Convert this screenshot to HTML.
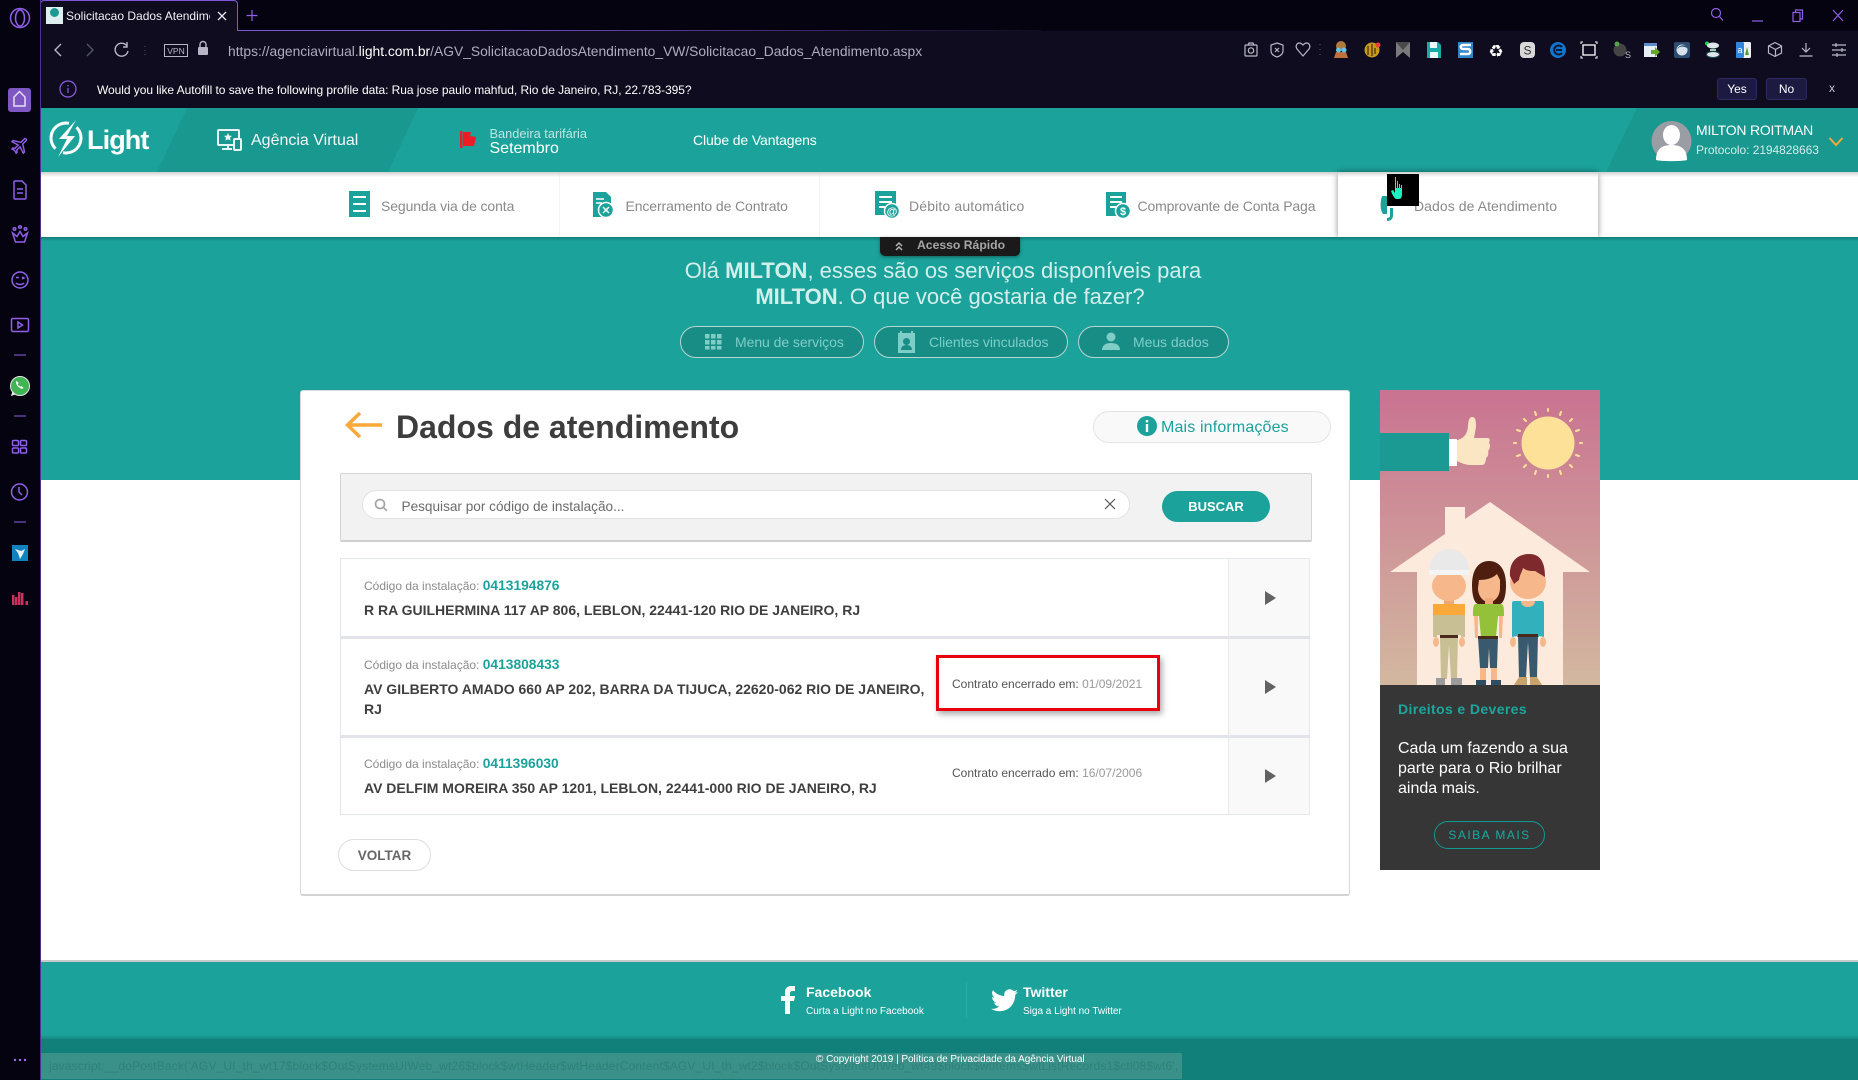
<!DOCTYPE html>
<html lang="pt-BR"><head><meta charset="utf-8"><title>Solicitacao Dados Atendimento</title>
<style>
*{box-sizing:border-box}
html,body{margin:0;padding:0;width:1858px;height:1080px;overflow:hidden;background:#fff;font-family:"Liberation Sans",sans-serif}
.a{position:absolute}
.t{position:absolute;white-space:nowrap}
.pill{position:absolute;height:32px;border-radius:16px;background:#178d86;border:1px solid #b9d4d1}
.cell{position:absolute;top:172px;height:65px;width:260px;border-right:1px solid #f4f4f4;background:#fff}
.sn{position:absolute;top:196.500px;line-height:18px;font-size:14px;letter-spacing:-.11px;color:#8a8a8a;white-space:nowrap}
.code{position:absolute;left:364px;font-size:12px;line-height:16px;color:#8b8b8b;white-space:nowrap}
.code b{color:#1ba29b;font-size:13.800px}
.addr{position:absolute;left:364px;font-size:14px;line-height:20px;font-weight:700;color:#3f3f3f;white-space:nowrap}
.enc{position:absolute;left:952px;font-size:12px;line-height:16px;color:#555;white-space:nowrap}
.enc span{color:#999}
</style></head>
<body>
<!-- browser chrome -->
<div class="a" style="left:0;top:0;width:1858px;height:31px;background:#05030f"></div>
<div class="a" style="left:41px;top:31px;width:1817px;height:77px;background:#0e0c1e"></div>
<div class="a" style="left:41px;top:30px;width:1000px;height:1px;background:linear-gradient(90deg,#7d55d8 0,#7d55d8 40%,#0e0c1e 100%)"></div>
<div class="a" style="left:40px;top:0;width:198px;height:31px;background:#0e0c1e;border:1px solid #7d55d8;border-bottom:0;border-radius:4px 4px 0 0"></div>
<div class="a" style="left:46px;top:7px;width:17px;height:17px;background:#dfeeee"></div>
<div class="a" style="left:50px;top:8px;width:9px;height:9px;border-radius:50%;background:#1a9a93"></div>
<div class="t" style="left:66px;top:8px;width:144px;overflow:hidden;font-size:12px;line-height:16px;color:#f0eff5">Solicitacao Dados Atendimento</div>
<div class="t" style="left:228px;top:41px;font-size:13.840px;line-height:20px;color:#aeacbd">https://agenciavirtual.<span style="color:#fff">light.com.br</span>/AGV_SolicitacaoDadosAtendimento_VW/Solicitacao_Dados_Atendimento.aspx</div>
<div class="t" style="left:97px;top:81px;font-size:12px;line-height:18px;color:#fff;letter-spacing:-.055px">Would you like Autofill to save the following profile data: Rua jose paulo mahfud, Rio de Janeiro, RJ, 22.783-395?</div>
<div class="t" style="left:1717px;top:78px;width:40px;height:22px;background:#1c1a40;border:1px solid #2e2a5f;border-radius:3px;color:#fff;font-size:12px;line-height:20px;text-align:center">Yes</div>
<div class="t" style="left:1766px;top:78px;width:41px;height:22px;background:#1c1a40;border:1px solid #2e2a5f;border-radius:3px;color:#fff;font-size:12px;line-height:20px;text-align:center">No</div>
<div class="t" style="left:1829px;top:80px;font-size:12px;line-height:16px;color:#c5c4d0">x</div>

<!-- sidebar -->
<div class="a" style="left:0;top:0;width:41px;height:1080px;background:#05030f;border-right:1px solid #4d3494;z-index:5"></div>

<!-- header -->
<div class="a" style="left:41px;top:108px;width:1817px;height:64px;background:#1ba29b"></div>
<svg class="a" style="left:41px;top:108px" width="1817" height="64" viewBox="41 108 1817 64">
<polygon points="187,108 418,108 388,172 157,172" fill="#18988f"/>
<polygon points="1637,108 1858,108 1858,172 1606,172" fill="#18988f"/>
<g fill="none" stroke="#fff" stroke-width="3">
<path d="M69 123.300A15 15 0 0 0 55.500 148.700"/>
<path d="M63 152.700A15 15 0 0 0 76.500 127.300"/>
</g>
<polygon points="76,120 59,139 67,139 58,157 75,136 67,136" fill="#fff"/>
<g fill="none" stroke="#e8f5f4" stroke-width="2"><rect x="218" y="130" width="21" height="15" rx="1"/><path d="M228 145v4M222 149h10"/><rect x="234" y="139" width="7" height="11" rx="1" fill="#18968f"/></g>
<path d="M228 133l1.200 2.600 2.800.3-2 1.900.5 2.800-2.500-1.400-2.500 1.400.5-2.800-2-1.900 2.800-.3z" fill="#e8f5f4"/>
<path d="M460 131h2.500v17H460zM463 132h8l-1 4 6 1-2 9h-11z" fill="#ec1b24"/>
<circle cx="1671.500" cy="141" r="20" fill="#9a9da3"/>
<ellipse cx="1671.500" cy="135" rx="8.500" ry="10" fill="#fff"/>
<path d="M1656 160c0-11 6-15 15.500-15s15.500 4 15.500 15c-4 1.500-27 1.500-31 0z" fill="#fff"/>
<path d="M1829.500 138l6.500 7 6.500-7" fill="none" stroke="#f4a83a" stroke-width="2"/>
</svg>
<div class="t" style="left:87px;top:123px;font-size:27px;line-height:34px;font-weight:700;color:#fff;letter-spacing:-.9px">Light</div>
<div class="t" style="left:251px;top:131px;font-size:16px;line-height:20px;color:#f0f9f8">Agência Virtual</div>
<div class="t" style="left:489.500px;top:126px;font-size:12.800px;line-height:16px;color:#bfe5e1">Bandeira tarifária</div>
<div class="t" style="left:489.500px;top:140px;font-size:16px;line-height:18px;color:#fff">Setembro</div>
<div class="t" style="left:693px;top:131px;font-size:14px;line-height:18px;color:#fff;letter-spacing:-.12px">Clube de Vantagens</div>
<div class="t" style="left:1696px;top:121px;font-size:14px;line-height:18px;color:#fff;letter-spacing:-.22px">MILTON ROITMAN</div>
<div class="t" style="left:1696px;top:142px;font-size:12px;line-height:16px;color:#d2ecea;letter-spacing:-.06px">Protocolo: 2194828663</div>

<!-- subnav -->
<div class="a" style="left:41px;top:172px;width:1817px;height:65px;background:#fff"></div>
<div class="cell" style="left:300px"></div><div class="cell" style="left:560px"></div><div class="cell" style="left:820px"></div><div class="cell" style="left:1079px"></div>
<div class="a" style="left:1338px;top:172px;width:260px;height:65px;background:#fff;box-shadow:0 0 6px rgba(0,0,0,.45)"></div>
<div class="a" style="left:41px;top:172px;width:1817px;height:5px;background:linear-gradient(#cfcfcf,rgba(255,255,255,0))"></div>
<div class="sn" style="left:381px">Segunda via de conta</div>
<div class="sn" style="left:625.500px">Encerramento de Contrato</div>
<div class="sn" style="left:909px;letter-spacing:.15px">Débito automático</div>
<div class="sn" style="left:1137.500px;letter-spacing:-.14px">Comprovante de Conta Paga</div>
<div class="sn" style="left:1414px;letter-spacing:.07px">Dados de Atendimento</div>
<svg class="a" style="left:300px;top:172px;z-index:2" width="1300" height="65" viewBox="300 172 1300 65">
<g fill="#1ba29b">
<path d="M349 191h21v26h-21z"/><g stroke="#fff" stroke-width="2"><path d="M353 197h13M353 204h13M353 211h13"/></g>
<path d="M593 192h13l5 5v20h-18z"/><circle cx="606" cy="210" r="7.500" stroke="#fff" stroke-width="1.500"/><path d="M603 207l6 6m0-6l-6 6" stroke="#fff" stroke-width="1.500"/><path d="M596 199h8M596 203h6" stroke="#fff" stroke-width="1.500"/>
<path d="M875 191h21v24h-21z"/><path d="M879 197h13M879 202h13M879 207h7" stroke="#fff" stroke-width="2"/><circle cx="892" cy="211" r="7.500" stroke="#fff" stroke-width="1.500"/><text x="892" y="215" font-size="11" font-family="Liberation Sans" font-weight="700" fill="#fff" text-anchor="middle">@</text>
<path d="M1106 192h20v24h-20z"/><path d="M1110 197h12M1110 202h12M1110 207h6" stroke="#fff" stroke-width="2"/><circle cx="1123" cy="211" r="7.500" stroke="#fff" stroke-width="1.500"/><text x="1123" y="215" font-size="11" font-family="Liberation Sans" font-weight="700" fill="#fff" text-anchor="middle">$</text>
<path d="M1382 196c-2 6-2 14 1 18h4v-18zM1393 208v7c0 4-2 6-6 6v-3c2 0 3-1 3-3v-7z"/>
</g>
<rect x="1387" y="174" width="32" height="32" fill="#000"/>
<path d="M1395 177h1v11h1v-7h1v7h1v-4h1v4h1v-3h1v9c0 3-1 5-3 5h-3c-2-1-4-5-5-8l2-1 2 3z" fill="#1ff0c0"/>
</svg>

<!-- teal section -->
<div class="a" style="left:41px;top:237px;width:1817px;height:243px;background:#1ba29b"></div>
<div class="a" style="left:41px;top:237px;width:1817px;height:4px;background:linear-gradient(#127a74,#1ba29b)"></div>
<div class="a" style="left:880px;top:237px;width:140px;height:19px;background:#1b1a1a;border-radius:0 0 5px 5px;box-shadow:0 1px 3px rgba(0,0,0,.4)"></div>
<svg class="a" style="left:893px;top:240px" width="12" height="12" viewBox="0 0 12 12"><path d="M3 6l3-3 3 3M3 10l3-3 3 3" fill="none" stroke="#b5b5b5" stroke-width="1.500"/></svg>
<div class="t" style="left:917px;top:237px;font-size:12.200px;line-height:16px;font-weight:700;color:#a6a6a6">Acesso Rápido</div>
<div class="t" style="left:543px;top:258px;width:800px;text-align:center;font-size:22px;line-height:26px;color:#d3eeeb"><span>Olá <b>MILTON</b>, esses são os serviços disponíveis para</span><br><span style="position:relative;left:7px"><b>MILTON</b>. O que você gostaria de fazer?</span></div>

<div class="pill" style="left:680px;top:326px;width:184px"></div>
<div class="pill" style="left:874px;top:326px;width:194px"></div>
<div class="pill" style="left:1078px;top:326px;width:151px"></div>
<div class="t" style="left:735px;top:333px;font-size:14px;line-height:18px;letter-spacing:-.06px;color:#7fcdc7">Menu de serviços</div>
<div class="t" style="left:929px;top:333px;font-size:14px;line-height:18px;letter-spacing:-.06px;color:#7fcdc7">Clientes vinculados</div>
<div class="t" style="left:1133px;top:333px;font-size:14px;line-height:18px;letter-spacing:-.06px;color:#7fcdc7">Meus dados</div>
<svg class="a" style="left:700px;top:328px" width="500" height="30" viewBox="700 328 500 30">
<g fill="#7fcdc7">
<path d="M705 334h4.500v4.500H705zM711 334h4.500v4.500H711zM717 334h4.500v4.500H717zM705 340h4.500v4.500H705zM711 340h4.500v4.500H711zM717 340h4.500v4.500H717zM705 346h4.500v3.500H705zM711 346h4.500v3.500H711zM717 346h4.500v3.500H717z"/>
<path fill-rule="evenodd" d="M898 333h2v-2h2v2h9v-2h2v2h2v20h-17zM906.500 338a3.500 3.500 0 1 0 .01 0zM901 350c0-3 2-5 5.500-5s5.500 2 5.500 5z"/>
<circle cx="1111" cy="337" r="4.500"/><path d="M1102 350c0-5 4-7 9-7s9 2 9 7z"/>
</g></svg>

<!-- main card -->
<div class="a" style="left:300px;top:390px;width:1050px;height:506px;background:#fff;border:1px solid #d9d9d9;border-bottom:2px solid #d2d2d2;border-radius:3px"></div>
<svg class="a" style="left:345px;top:410px" width="38" height="30" viewBox="0 0 38 30"><path d="M37 15H3M15 3L2.500 15 15 27" fill="none" stroke="#f9a83a" stroke-width="3.500"/></svg>
<div class="t" style="left:396px;top:408px;font-size:32px;line-height:38px;font-weight:700;color:#3d3d3d">Dados de atendimento</div>
<div class="a" style="left:1093px;top:411px;width:238px;height:32px;border-radius:16px;background:#f9f9f9;border:1px solid #e4e4e4"></div>
<svg class="a" style="left:1137px;top:416px" width="20" height="20" viewBox="0 0 20 20"><circle cx="10" cy="10" r="10" fill="#1ba29b"/><path d="M8.800 4h2.400v2.400H8.800zM8.800 8h2.400v8H8.800z" fill="#fff"/></svg>
<div class="t" style="left:1161px;top:418px;font-size:16px;line-height:20px;color:#1ba29b;letter-spacing:.15px">Mais informações</div>

<div class="a" style="left:340px;top:473px;width:972px;height:69px;background:#f2f2f2;border:1px solid #d5d5d5;border-bottom:2px solid #cfcfcf;border-radius:2px"></div>
<div class="a" style="left:362px;top:490px;width:768px;height:29px;background:#fff;border:1px solid #e3e3e3;border-radius:15px"></div>
<svg class="a" style="left:373px;top:497px" width="16" height="16" viewBox="0 0 16 16"><circle cx="7" cy="7" r="4.500" fill="none" stroke="#a5a5a5" stroke-width="1.700"/><path d="M10.300 10.300l3.500 3.500" stroke="#a5a5a5" stroke-width="1.700"/></svg>
<div class="t" style="left:401.500px;top:497.500px;font-size:13.600px;line-height:18px;color:#6b6b6b">Pesquisar por código de instalação...</div>
<svg class="a" style="left:1104px;top:498px" width="12" height="12" viewBox="0 0 12 12"><path d="M1 1l10 10M11 1L1 11" stroke="#555" stroke-width="1.200"/></svg>
<div class="t" style="left:1162px;top:491px;width:108px;height:31px;background:#1ba29b;border-radius:16px;color:#fff;font-size:13px;font-weight:700;line-height:31px;text-align:center">BUSCAR</div>

<!-- list -->
<div class="a" style="left:340px;top:558px;width:970px;height:257px;background:#fff;border:1px solid #e3e5ea"></div>
<div class="a" style="left:1228px;top:558px;width:82px;height:257px;background:#f9f9f9;border:1px solid #e8e9ec"></div>
<div class="a" style="left:340px;top:636px;width:970px;height:3px;background:#e1e4e8"></div>
<div class="a" style="left:340px;top:735px;width:970px;height:3px;background:#e1e4e8"></div>

<div class="code" style="top:578px">Código da instalação: <b>0413194876</b></div>
<div class="addr" style="top:600px">R RA GUILHERMINA 117 AP 806, LEBLON, 22441-120 RIO DE JANEIRO, RJ</div>
<div class="code" style="top:657px">Código da instalação: <b>0413808433</b></div>
<div class="addr" style="top:679px">AV GILBERTO AMADO 660 AP 202, BARRA DA TIJUCA, 22620-062 RIO DE JANEIRO,<br>RJ</div>
<div class="code" style="top:756px">Código da instalação: <b>0411396030</b></div>
<div class="addr" style="top:778px">AV DELFIM MOREIRA 350 AP 1201, LEBLON, 22441-000 RIO DE JANEIRO, RJ</div>

<div class="a" style="left:936px;top:655px;width:224px;height:56px;background:#fff;border:3px solid #e8000f;box-shadow:2px 3px 6px rgba(0,0,0,.35)"></div>
<div class="enc" style="top:676px">Contrato encerrado em: <span>01/09/2021</span></div>
<div class="enc" style="top:765px">Contrato encerrado em: <span>16/07/2006</span></div>

<svg class="a" style="left:1260px;top:580px" width="20" height="210" viewBox="0 0 20 210"><path d="M5 11l11 7-11 7zM5 100l11 7-11 7zM5 189l11 7-11 7z" fill="#636363"/></svg>

<div class="t" style="left:338px;top:839px;width:93px;height:32px;border:1px solid #dedede;border-radius:16px;background:#fff;color:#666;font-size:13.500px;font-weight:700;line-height:32px;text-align:center">VOLTAR</div>

<!-- banner -->
<svg class="a" style="left:1380px;top:390px" width="220" height="295" viewBox="0 0 220 295">
<defs><linearGradient id="g" x1="0" y1="0" x2="0" y2="1"><stop offset="0" stop-color="#c97391"/><stop offset="1" stop-color="#d3b8a0"/></linearGradient></defs>
<rect width="220" height="295" fill="url(#g)"/>
<g fill="#fee198"><circle cx="168" cy="53" r="26.500"/>
<g stroke="#fee198" stroke-width="2" stroke-linecap="round">
<path d="M168 19v2M168 85v2M134 53h2M200 53h2M144 29l2 2M190 75l2 2M192 29l-2 2M146 75l-2 2M155 22l1 3M180 81l1 3M181 22l-1 3M156 81l-1 3M137 40l3 1M196 65l3 1M199 40l-3 1M140 65l-3 1"/></g></g>
<path d="M0 43h69v38H0z" fill="#1a9a93"/><path d="M69 49h8v27h-8z" fill="#fff"/>
<path d="M77 50c6-1 10-5 11-13 0-5 1-10 4-10 4 0 4 5 4 10l-2 11h14c2 0 2 3 1 5 2 2 1 6-1 8 1 2 0 6-2 7 0 3-1 7-4 7H90c-4 0-9-2-13-4z" fill="#fbe6c4"/>
<path d="M65 144V117h20v12l25-17 100 70h-27v113H37V182H10z" fill="#fcebdc"/>
<!-- worker -->
<path d="M53 214h32v11H53z" fill="#f8a93a"/>
<path d="M53 225h32v22l-4 0v-2H57v2l-4 0z" fill="#c9bf95"/>
<path d="M60 246h18l-1 43h-6l-2-34-2 34h-6z" fill="#c9bf95"/><path d="M60 245h18v3H60z" fill="#4a2a1a"/>
<ellipse cx="56" cy="252" rx="3" ry="5" fill="#f6b88b"/><ellipse cx="82" cy="252" rx="3" ry="5" fill="#f6b88b"/>
<path d="M56 288h9v7H56zM71 288h11v7H71z" fill="#9b9b9b"/>
<path d="M64 208h10v6H64z" fill="#efa878"/>
<ellipse cx="69" cy="196" rx="17" ry="15" fill="#f6b88b"/>
<path d="M49 185c0-16 8-26 20-26s20 10 20 22v4z" fill="#e9e9e9"/><path d="M49 180h40v5H49z" fill="#f4f4f4"/>
<!-- woman -->
<path d="M92 195c0-16 7-24 17-24s17 8 17 24c0 10-2 18-6 19H98c-4-1-6-9-6-19z" fill="#4e1f0e"/>
<path d="M99 190c8 0 14-2 18-6l3 6v8c0 8-5 14-11 14s-11-6-11-14z" fill="#f6b88b"/>
<path d="M105 208h8v6h-8z" fill="#efa878"/>
<path d="M96 214h25c3 0 3 5 3 12h-6l-2 21H101l-2-21h-6c0-7 0-12 3-12z" fill="#93c13a"/>
<path d="M94 226h4v22h-3zM119 226h4l-1 22h-3z" fill="#f6b88b"/>
<path d="M98 247h20l-1 31h-7l-1-20-1 20h-8z" fill="#395a6e"/><path d="M98 246h20v3H98z" fill="#4a2a1a"/>
<path d="M100 278h6v12h-6zM111 278h6v12h-6z" fill="#f6b88b"/>
<path d="M96 290h10v5H96zM111 290h10v5h-10z" fill="#2f4d60"/>
<!-- man -->
<ellipse cx="148" cy="192" rx="18" ry="17" fill="#f6b88b"/>
<path d="M130 186c-1-14 7-22 19-22 10 0 16 6 16 23l-10-6c-4 0-8 0-12-3-1 4-3 6-4 12l-5 4z" fill="#7e2a2d"/>
<path d="M134 211h28c2 0 2 2 2 4v32l-5-1v1h-22v-1l-5 1v-32c0-2 0-4 2-4z" fill="#32b0bb"/>
<path d="M141 211h14c0 4-3 6-7 6s-7-2-7-6z" fill="#f6b88b"/>
<ellipse cx="133" cy="252" rx="3" ry="5" fill="#f6b88b"/><ellipse cx="163" cy="252" rx="3" ry="5" fill="#f6b88b"/>
<path d="M138 245h20l-1 43h-7l-2-36-2 36h-7z" fill="#395a6e"/><path d="M138 244h20v3h-20z" fill="#4a2a1a"/>
<path d="M134 295l5-8h8v8zM150 295v-8h7l5 8z" fill="#c7a26b"/>
</svg>
<div class="a" style="left:1380px;top:685px;width:220px;height:185px;background:#363636"></div>
<div class="t" style="left:1398px;top:700px;font-size:14px;line-height:18px;font-weight:700;color:#1aa79e;letter-spacing:.38px">Direitos e Deveres</div>
<div class="t" style="left:1398px;top:738.500px;font-size:16px;line-height:20px;color:#fff">Cada um fazendo a sua<br>parte para o Rio brilhar<br>ainda mais.</div>
<div class="t" style="left:1434px;top:821px;width:111px;height:28px;border:1px solid #0f9a92;border-radius:14px;color:#14ada3;font-size:12px;letter-spacing:1.500px;line-height:26px;text-align:center">SAIBA MAIS</div>

<!-- footer -->
<div class="a" style="left:41px;top:960px;width:1817px;height:2px;background:#c9c9c9"></div>
<div class="a" style="left:41px;top:962px;width:1817px;height:77px;background:#1ba29b"></div>
<div class="a" style="left:41px;top:1035px;width:1817px;height:4px;background:linear-gradient(rgba(20,120,114,0),#168a83)"></div>
<div class="a" style="left:41px;top:1039px;width:1817px;height:41px;background:#12807a"></div>
<svg class="a" style="left:780px;top:986px" width="18" height="28" viewBox="0 0 18 28"><path d="M5 28V15H1v-5h4V6c0-4 3-6 6-6h4v5h-3c-1 0-2 1-2 2v3h5l-1 5h-4v13z" fill="#fff"/></svg>
<div class="t" style="left:806px;top:984px;font-size:14px;line-height:16px;font-weight:700;color:#fff">Facebook</div>
<div class="t" style="left:806px;top:1005px;font-size:10px;line-height:14px;color:#fff">Curta a Light no Facebook</div>
<div class="a" style="left:966px;top:982px;width:1px;height:36px;background:#2eaaa3"></div>
<svg class="a" style="left:991px;top:989px" width="27" height="23" viewBox="0 0 24 20"><path d="M24 2.400c-.9.400-1.800.7-2.800.8 1-.6 1.800-1.600 2.200-2.700-1 .6-2 1-3.100 1.200C19.300.7 18 0 16.600 0c-2.700 0-4.900 2.200-4.900 4.900 0 .4 0 .8.100 1.100C7.700 5.800 4.100 3.900 1.700.9 1.200 1.600 1 2.500 1 3.400c0 1.700.9 3.200 2.200 4.100-.8 0-1.600-.2-2.200-.6v.1c0 2.400 1.700 4.400 3.900 4.800-.7.200-1.500.2-2.200.1.600 1.900 2.400 3.400 4.600 3.400-1.700 1.300-3.800 2.100-6.100 2.100-.4 0-.8 0-1.200-.1C2.200 18.700 4.800 19.500 7.500 19.500c9.100 0 14-7.500 14-14v-.6c1-.7 1.800-1.600 2.500-2.500z" fill="#fff"/></svg>
<div class="t" style="left:1023px;top:984px;font-size:14px;line-height:16px;font-weight:700;color:#fff">Twitter</div>
<div class="t" style="left:1023px;top:1005px;font-size:10px;line-height:14px;color:#fff">Siga a Light no Twitter</div>
<div class="a" style="left:41px;top:1053px;width:1141px;height:26px;background:#3a9189;z-index:3"></div>
<div class="t" style="left:49px;top:1058px;width:1128px;overflow:hidden;font-size:12px;line-height:16px;color:#2f8179;z-index:3;letter-spacing:.16px">javascript:__doPostBack('AGV_UI_th_wt17$block$OutSystemsUIWeb_wt26$block$wtHeader$wtHeaderContent$AGV_UI_th_wt2$block$OutSystemsUIWeb_wt49$block$wtItems$wtListRecords1$ctl08$wt6','')</div>
<div class="t" style="left:816px;top:1053px;font-size:10px;line-height:14px;color:#fff;z-index:4;letter-spacing:-.04px">© Copyright 2019 | Política de Privacidade da Agência Virtual</div>

<!-- chrome icons overlay -->
<svg class="a" style="left:0;top:0;z-index:6;pointer-events:none" width="1858" height="1080" viewBox="0 0 1858 1080">
<!-- sidebar icons -->
<g fill="none" stroke="#8f5fe8" stroke-width="1.500">
<circle cx="20" cy="18" r="9.500"/><ellipse cx="20" cy="18" rx="4.500" ry="8"/>
<rect x="8" y="88" width="23" height="24" rx="3" fill="#7e57c2" stroke="none"/>
<path d="M14 97l5.500-5.500L25 97v9H14z" stroke="#e6ddfa"/>
<path transform="translate(20 145) rotate(45) scale(.85) translate(-11.500 -12)" stroke-width="1.700" d="M21 16v-2l-8-5V3.500C13 2.670 12.330 2 11.500 2S10 2.670 10 3.500V9l-8 5v2l8-2.500V19l-2 1.500V22l3.500-1 3.500 1v-1.500L13 19v-5.500z"/>
<path d="M15 181h7l4 4v13a1 1 0 0 1-1 1H15a1 1 0 0 1-1-1v-16a1 1 0 0 1 1-1zM17 189h6M17 193h6"/>
<path d="M12.500 233l3 9h9l3-9-4.500 3.500-3-5-3 5z"/><circle cx="14.500" cy="229" r="1.300"/><circle cx="20" cy="227" r="1.300"/><circle cx="25.500" cy="229" r="1.300"/>
<circle cx="20" cy="280" r="8"/><path d="M16 283c2 2 6 2 8 0M16 277.500h3M22 277l2 1-2 1"/>
<rect x="11.500" y="318.500" width="17" height="13" rx="1.500"/><path d="M18 322v6l4.500-3z"/>
<rect x="12.500" y="440.500" width="6" height="5" rx="1"/><rect x="20.500" y="440.500" width="6" height="5" rx="1"/><rect x="12.500" y="448" width="6" height="5" rx="1"/><rect x="20.500" y="448" width="6" height="5" rx="1"/>
<circle cx="19.500" cy="492" r="8"/><path d="M19 487v5l3 3"/>
</g>
<path d="M14 355h12M14 416h12M14 522h12" stroke="#8f5fe8" stroke-width="1"/>
<circle cx="20" cy="386" r="9.500" fill="#41b455" stroke="#e8e8e8" stroke-width="1"/><path d="M11 396l1.500-5 3 3.500z" fill="#e8e8e8"/>
<path d="M16.500 381c-1 1-.5 3.500 1.500 5.500s4.500 3 5.500 1.500l-2-2-1.300.7c-1-.5-2-1.500-2.300-2.500l.8-1.200z" fill="#fff"/>
<rect x="12" y="545" width="16" height="16" fill="#1082bd"/><path d="M15 549l6 2 4-2-2 5-3 5-2-6z" fill="#e8f2f8"/>
<path d="M12 595h2.500v10H12zM15 597h2.500v8H15zM18 592h2.500v13H18zM21 593h2.500v12H21zM25.500 601H28v4h-2.500z" fill="#c9325f"/>
<circle cx="15" cy="1060" r="1.200" fill="#a070f0"/><circle cx="20" cy="1060" r="1.200" fill="#a070f0"/><circle cx="25" cy="1060" r="1.200" fill="#a070f0"/>
<!-- tab -->
<path d="M218 12l8 8M226 12l-8 8" stroke="#e8e7f0" stroke-width="1.300"/>
<path d="M252 10v11M246.500 15.500h11" stroke="#8f5fe8" stroke-width="1.200"/>
<!-- nav -->
<g fill="none" stroke="#b8b6c6" stroke-width="1.400">
<path d="M61 44l-6 6 6 6"/>
<path d="M87 44l6 6-6 6" stroke="#56546a"/>
<path d="M127 46a6.500 6.500 0 1 0 1 5M127 42v5h-4"/>
<rect x="164.500" y="44.500" width="23" height="12" stroke-width="1"/>
<path d="M200 47v-2.500a3 3 0 0 1 6 0V47"/>
</g>
<rect x="198" y="47" width="10" height="8" rx="1" fill="#b8b6c6"/>
<path d="M145 46v1M145 50v1M145 54v1" stroke="#55536a"/>
<text x="176" y="54" font-size="8.500" font-family="Liberation Sans" fill="#b8b6c6" text-anchor="middle">VPN</text>
<!-- info -->
<circle cx="68" cy="89" r="8" fill="none" stroke="#8f5fe8" stroke-width="1.200"/><path d="M68 85v1.500M68 88v5" stroke="#8f5fe8" stroke-width="1.200"/>
<!-- toolbar -->
<g fill="none" stroke="#b9b8c6" stroke-width="1.200">
<rect x="1245" y="45" width="12" height="11" rx="1"/><circle cx="1251" cy="50.500" r="2.700"/><path d="M1248 45l1-2h4l1 2"/>
<path d="M1277 43l6 2v6c0 3-3 5-6 6-3-1-6-3-6-6v-6zM1275 48l4 4m0-4l-4 4"/>
<path d="M1303 56l-6-7c-2-3 0-6 2.500-6 1.500 0 2.500 1 3.500 2 1-1 2-2 3.500-2 2.500 0 4.500 3 2.500 6z"/>
<path d="M1320 44v1M1320 49v1M1320 54v1" stroke="#55536a"/>
<path d="M1775 42.500l6.500 3.500v7l-6.500 3.500-6.500-3.500v-7zM1769 46l6.500 3.500 6.500-3.500M1775.500 49.500v7"/>
<path d="M1806 43v8M1802 48l4 4 4-4M1799.500 56h13"/>
<path d="M1832 45h14M1832 50h14M1832 55h14"/><path d="M1836 43v4M1842 48v4M1837 53v4"/>
</g>
<circle cx="1341" cy="46" r="5" fill="#b07a3e"/><path d="M1336 52h10l2 6h-14z" fill="#c0703a"/><circle cx="1338.500" cy="50" r="2.500" fill="#5fc4ee"/><circle cx="1344" cy="50" r="2.500" fill="#5fc4ee"/>
<circle cx="1372" cy="50" r="7.500" fill="#c79a1a"/><path d="M1368 46v9M1372 44v12M1375 48v6" stroke="#241a06"/><circle cx="1378" cy="45" r="2.500" fill="#e84040"/>
<path d="M1396 42h14v16l-7-6-7 6z" fill="#7a7a7a"/><path d="M1396 42h14l-7 8z" fill="#4a4a4a"/>
<path d="M1427 42h11l3 3v13h-14z" fill="#1ea9a9"/><path d="M1430 42h7v6h-7zM1430 52h8v6h-8z" fill="#e9f7f7"/>
<rect x="1458" y="42" width="15" height="16" fill="#2f86c8"/><path d="M1471 45h-8c-3 0-3 4 0 4h5c3 0 3 5 0 5h-8" fill="none" stroke="#fff" stroke-width="2.500"/>
<text x="1496" y="57" font-size="17" font-family="DejaVu Sans" fill="#fff" text-anchor="middle">♻</text>
<rect x="1520" y="42" width="15" height="16" rx="4" fill="#d8d8d8"/><text x="1527.500" y="54.500" font-size="12" font-family="Liberation Sans" fill="#333" text-anchor="middle">S</text>
<circle cx="1558" cy="50" r="8" fill="#0f76d2"/><path d="M1562 47a4.500 4.500 0 1 0 0 6M1556 50h6" fill="none" stroke="#101a30" stroke-width="2"/>
<rect x="1583" y="45" width="12" height="10" fill="none" stroke="#fff" stroke-width="1.300"/><path d="M1581 44v-2h2M1595 42h2v2M1597 56v2h-2M1583 58h-2v-2" fill="none" stroke="#fff"/>
<circle cx="1620" cy="50" r="6.500" fill="#444"/><circle cx="1617" cy="44" r="2.500" fill="#5ba04a"/><text x="1625" y="58" font-size="9" font-family="Liberation Sans" fill="#bbb">S</text>
<rect x="1644" y="43" width="13" height="14" fill="#e8eef5"/><rect x="1644" y="43" width="13" height="3" fill="#5a8cc8"/><path d="M1651 50h4v-3l5 5-5 5v-3h-4z" fill="#6aa82c"/>
<rect x="1674" y="42" width="16" height="16" rx="2" fill="#2d4c70"/><circle cx="1682" cy="50" r="5.500" fill="#d8e2ec"/><path d="M1677 50c2-4 6-4 10-2v-1a6 6 0 0 0-10 3z" fill="#2d4c70"/>
<circle cx="1707" cy="43.500" r="2" fill="#16d850"/><ellipse cx="1713" cy="45.500" rx="6" ry="3" fill="#dfe6ea"/><ellipse cx="1713" cy="54.500" rx="6.500" ry="3" fill="#dfe6ea" stroke="#1d4a52"/><path d="M1710 49h6v2h-6z" fill="#9cb"/>
<rect x="1736" y="42" width="15" height="16" rx="1.500" fill="#eef2f4"/><rect x="1736" y="42" width="8" height="16" rx="1.500" fill="#2f86dc"/><text x="1740" y="53" font-size="9" font-family="Liberation Sans" fill="#fff" text-anchor="middle">a</text><path d="M1747 47l-2 8h4z" fill="#5a9a3a"/>
<!-- win controls -->
<g fill="none" stroke="#8f5fe8" stroke-width="1.200">
<circle cx="1716" cy="13" r="4.500"/><path d="M1719.500 16.500l3.500 4"/>
<path d="M1752 21h11"/>
<rect x="1793" y="12.500" width="7" height="9"/><path d="M1795.500 12.500v-2.500h7v9h-2.500"/>
<path d="M1833 10l10 11M1843 10l-10 11"/>
</g>
</svg>
</body></html>
